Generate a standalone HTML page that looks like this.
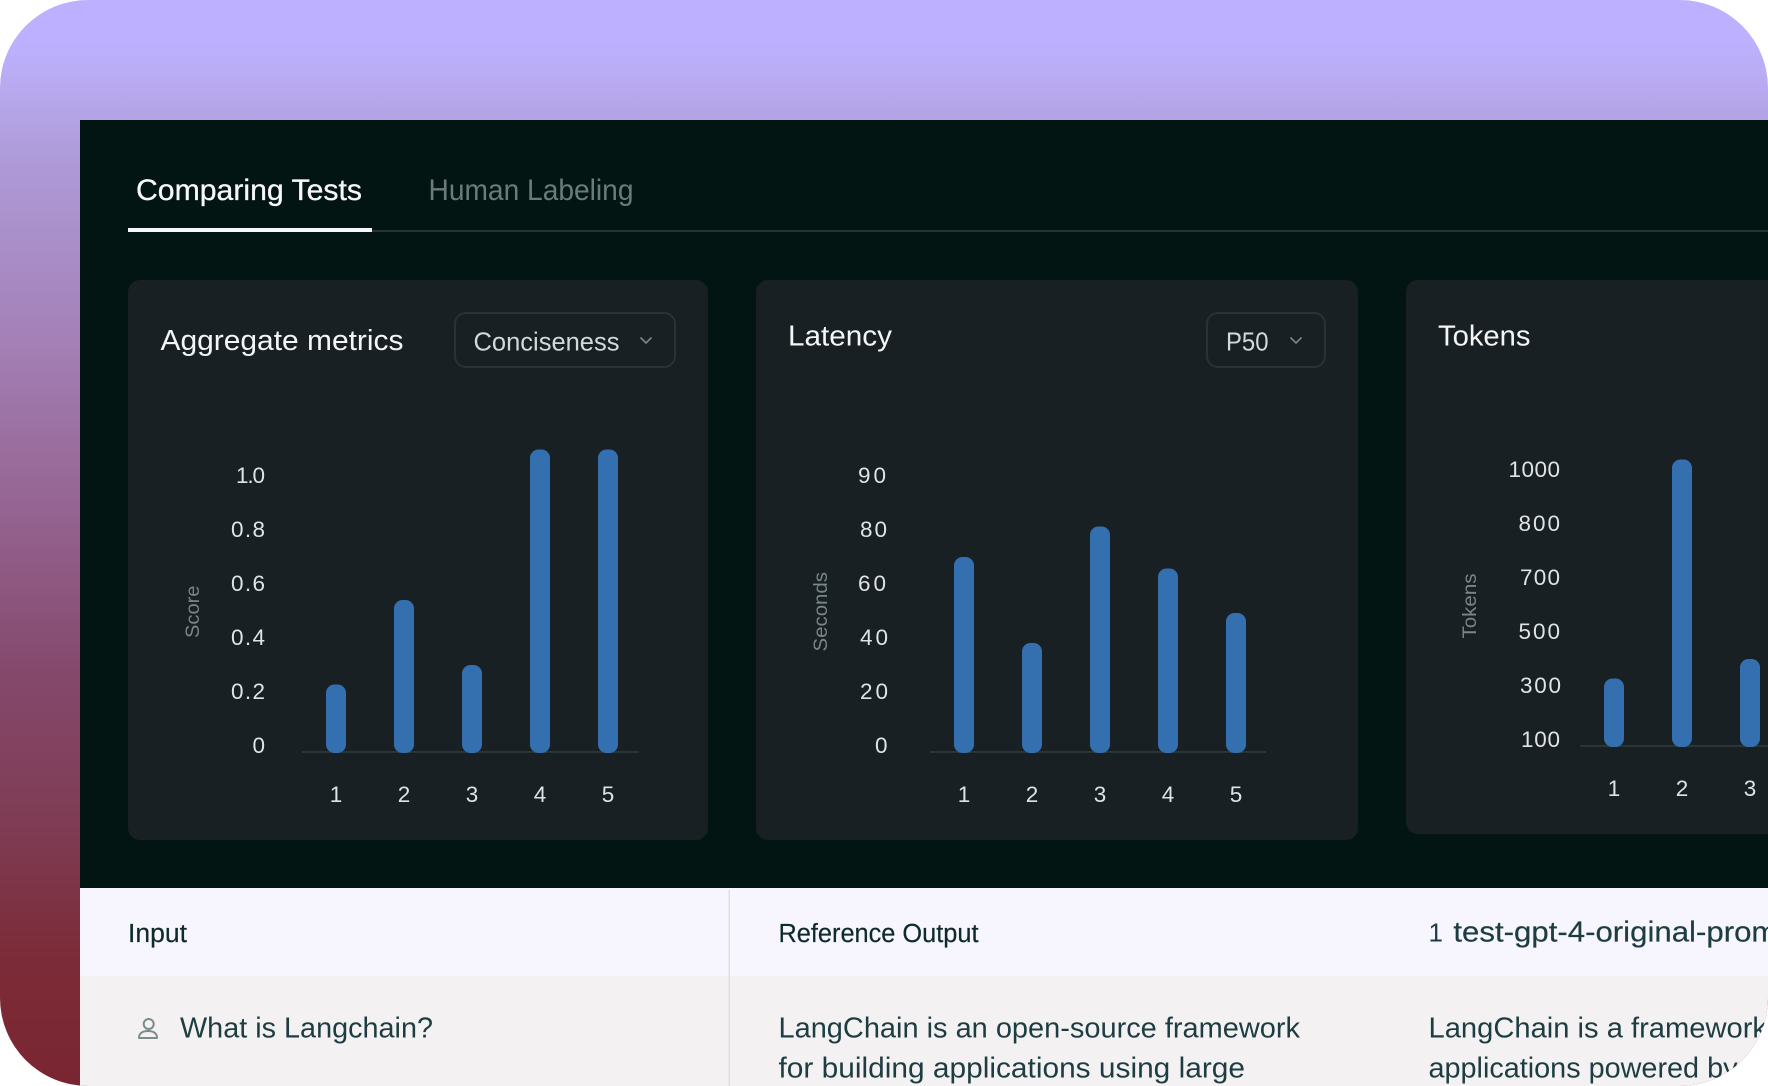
<!DOCTYPE html>
<html>
<head>
<meta charset="utf-8">
<style>
html,body{margin:0;padding:0;background:#fff;width:1768px;height:1086px;overflow:hidden}
svg{display:block}
text{font-family:"Liberation Sans",sans-serif}
.t{fill:#dfe3e4;font-size:22.5px}
.x{fill:#dfe3e4;font-size:22.5px;text-anchor:middle}
.a{fill:#7a8587;font-size:19.5px}
.h{fill:#f4f6f6;font-size:28.5px}
.s{fill:#d3d8d9;font-size:26px}
.r{fill:#1d3d42;font-size:29px}
.b{fill:#346fb0}
</style>
</head>
<body>
<svg width="1768" height="1086" viewBox="0 0 1768 1086" xmlns="http://www.w3.org/2000/svg">
<defs>
<linearGradient id="g" x1="0" y1="0" x2="0" y2="1">
<stop offset="0" stop-color="#bdb1ff"/>
<stop offset=".037" stop-color="#bdb1ff"/>
<stop offset=".083" stop-color="#b8a9ef"/>
<stop offset=".136" stop-color="#af9cda"/>
<stop offset=".297" stop-color="#a583ba"/>
<stop offset=".457" stop-color="#966694"/>
<stop offset=".617" stop-color="#85496d"/>
<stop offset=".777" stop-color="#7e3a50"/>
<stop offset=".884" stop-color="#7b2b37"/>
<stop offset="1" stop-color="#7a2632"/>
</linearGradient>
<clipPath id="c"><rect x="0" y="0" width="1768" height="1086" rx="88" ry="88"/></clipPath>
</defs>
<g clip-path="url(#c)">
<rect width="1768" height="1086" fill="url(#g)"/>
<rect x="80" y="120" width="1688" height="768" fill="#021513"/>

<!-- tabs -->
<text x="136" y="200" font-size="29.5" fill="#f6f6fb" stroke="#f6f6fb" stroke-width=".3" textLength="226" lengthAdjust="spacingAndGlyphs">Comparing Tests</text>
<text x="428.5" y="200" font-size="29.5" fill="#6c7a7c" textLength="205" lengthAdjust="spacingAndGlyphs">Human Labeling</text>
<rect x="372" y="230" width="1396" height="2" fill="#283336"/>
<rect x="128" y="228" width="244" height="4" fill="#f6f5fe"/>

<!-- cards -->
<rect x="128" y="280" width="580" height="560" rx="12" fill="#182024"/>
<rect x="756" y="280" width="602" height="560" rx="12" fill="#182024"/>
<rect x="1406" y="280" width="400" height="554" rx="12" fill="#182024"/>

<!-- card 1 -->
<text class="h" x="160.5" y="350" textLength="243" lengthAdjust="spacingAndGlyphs">Aggregate metrics</text>
<rect x="455" y="313" width="220" height="54" rx="11" fill="none" stroke="#273338" stroke-width="2"/>
<text class="s" x="473.5" y="350.5" textLength="146" lengthAdjust="spacingAndGlyphs">Conciseness</text>
<path d="M640.5 337.5 L646 343 L651.5 337.5" fill="none" stroke="#7b8587" stroke-width="1.6"/>
<text class="t" x="236" y="483" textLength="29" lengthAdjust="spacing">1.0</text>
<text class="t" x="231" y="537" textLength="34" lengthAdjust="spacing">0.8</text>
<text class="t" x="231" y="591" textLength="34" lengthAdjust="spacing">0.6</text>
<text class="t" x="231" y="645" textLength="34" lengthAdjust="spacing">0.4</text>
<text class="t" x="231" y="699" textLength="34" lengthAdjust="spacing">0.2</text>
<text class="t" x="252.5" y="753">0</text>
<text class="a" transform="translate(199 638) rotate(-90)" textLength="52.5" lengthAdjust="spacingAndGlyphs">Score</text>
<rect x="302" y="751" width="337" height="2" fill="#2a3539"/>
<rect class="b" x="326" y="684.5" width="20" height="68.5" rx="8.5"/>
<rect class="b" x="394" y="600" width="20" height="153" rx="8.5"/>
<rect class="b" x="462" y="665" width="20" height="88" rx="8.5"/>
<rect class="b" x="530" y="449.5" width="20" height="303.5" rx="8.5"/>
<rect class="b" x="598" y="449.5" width="20" height="303.5" rx="8.5"/>
<text class="x" x="336" y="802">1</text>
<text class="x" x="404" y="802">2</text>
<text class="x" x="472" y="802">3</text>
<text class="x" x="540" y="802">4</text>
<text class="x" x="608" y="802">5</text>

<!-- card 2 -->
<text class="h" x="788" y="345.5" textLength="104" lengthAdjust="spacingAndGlyphs">Latency</text>
<rect x="1207" y="313" width="118" height="54" rx="11" fill="none" stroke="#273338" stroke-width="2"/>
<text class="s" x="1226" y="350.5" textLength="42.5" lengthAdjust="spacingAndGlyphs">P50</text>
<path d="M1290.5 337.5 L1296 343 L1301.5 337.5" fill="none" stroke="#7b8587" stroke-width="1.6"/>
<text class="t" x="858" y="483" textLength="28" lengthAdjust="spacing">90</text>
<text class="t" x="860" y="537" textLength="27" lengthAdjust="spacing">80</text>
<text class="t" x="858" y="591" textLength="28" lengthAdjust="spacing">60</text>
<text class="t" x="860" y="645" textLength="28" lengthAdjust="spacing">40</text>
<text class="t" x="860" y="699" textLength="28" lengthAdjust="spacing">20</text>
<text class="t" x="875" y="753">0</text>
<text class="a" transform="translate(827 651.5) rotate(-90)" textLength="79.5" lengthAdjust="spacingAndGlyphs">Seconds</text>
<rect x="930" y="751" width="336" height="2" fill="#2a3539"/>
<rect class="b" x="954" y="557" width="20" height="196" rx="8.5"/>
<rect class="b" x="1022" y="643" width="20" height="110" rx="8.5"/>
<rect class="b" x="1090" y="526.5" width="20" height="226.5" rx="8.5"/>
<rect class="b" x="1158" y="568.5" width="20" height="184.5" rx="8.5"/>
<rect class="b" x="1226" y="613" width="20" height="140" rx="8.5"/>
<text class="x" x="964" y="802">1</text>
<text class="x" x="1032" y="802">2</text>
<text class="x" x="1100" y="802">3</text>
<text class="x" x="1168" y="802">4</text>
<text class="x" x="1236" y="802">5</text>

<!-- card 3 -->
<text class="h" x="1438" y="345.5" textLength="92.5" lengthAdjust="spacingAndGlyphs">Tokens</text>
<text class="t" x="1508.5" y="477" textLength="51.5" lengthAdjust="spacing">1000</text>
<text class="t" x="1518.5" y="531" textLength="41.5" lengthAdjust="spacing">800</text>
<text class="t" x="1520" y="585" textLength="40" lengthAdjust="spacing">700</text>
<text class="t" x="1518.5" y="639" textLength="41.5" lengthAdjust="spacing">500</text>
<text class="t" x="1520" y="693" textLength="41" lengthAdjust="spacing">300</text>
<text class="t" x="1521" y="747" textLength="39" lengthAdjust="spacing">100</text>
<text class="a" transform="translate(1476 638.5) rotate(-90)" textLength="65" lengthAdjust="spacingAndGlyphs">Tokens</text>
<rect x="1580" y="745" width="188" height="2" fill="#2a3539"/>
<rect class="b" x="1604" y="678.5" width="20" height="68.5" rx="8.5"/>
<rect class="b" x="1672" y="459.5" width="20" height="287.5" rx="8.5"/>
<rect class="b" x="1740" y="659" width="20" height="88" rx="8.5"/>
<text class="x" x="1614" y="796">1</text>
<text class="x" x="1682" y="796">2</text>
<text class="x" x="1750" y="796">3</text>

<!-- table -->
<rect x="80" y="888" width="1688" height="88" fill="#f7f6fe"/>
<rect x="80" y="976" width="1688" height="110" fill="#f4f1f2"/>
<rect x="728.5" y="890" width="1.5" height="196" fill="#dfdfe8"/>
<text x="128" y="942" font-size="25.5" fill="#0e2a2e" stroke="#0e2a2e" stroke-width=".2" textLength="59" lengthAdjust="spacingAndGlyphs">Input</text>
<text x="778.5" y="942" font-size="25.5" fill="#0e2a2e" stroke="#0e2a2e" stroke-width=".2" textLength="200" lengthAdjust="spacingAndGlyphs">Reference Output</text>
<text x="1428.5" y="941.7" font-size="26" fill="#1d3d42">1</text>
<text x="1453.4" y="941.7" font-size="29" fill="#1d3d42" stroke="#1d3d42" stroke-width=".2" textLength="350" lengthAdjust="spacingAndGlyphs">test-gpt-4-original-prompt</text>

<circle cx="148.7" cy="1024" r="5" fill="none" stroke="#7c8b8e" stroke-width="2"/>
<path d="M139 1038 C139 1033 143 1031 148 1031 C153 1031 157 1033 157 1038 Z" fill="none" stroke="#7c8b8e" stroke-width="2" stroke-linejoin="round"/>
<text class="r" x="180" y="1037.5" textLength="253" lengthAdjust="spacingAndGlyphs">What is Langchain?</text>
<text class="r" x="778.5" y="1037.5" textLength="521.5" lengthAdjust="spacingAndGlyphs">LangChain is an open-source framework</text>
<text class="r" x="778.5" y="1077.5" textLength="466.5" lengthAdjust="spacingAndGlyphs">for building applications using large</text>
<text class="r" x="1428.5" y="1037.5" textLength="338.5" lengthAdjust="spacingAndGlyphs">LangChain is a framework</text>
<text class="r" x="1428.5" y="1077.5" textLength="309" lengthAdjust="spacingAndGlyphs">applications powered by</text>
</g>
</svg>
</body>
</html>
